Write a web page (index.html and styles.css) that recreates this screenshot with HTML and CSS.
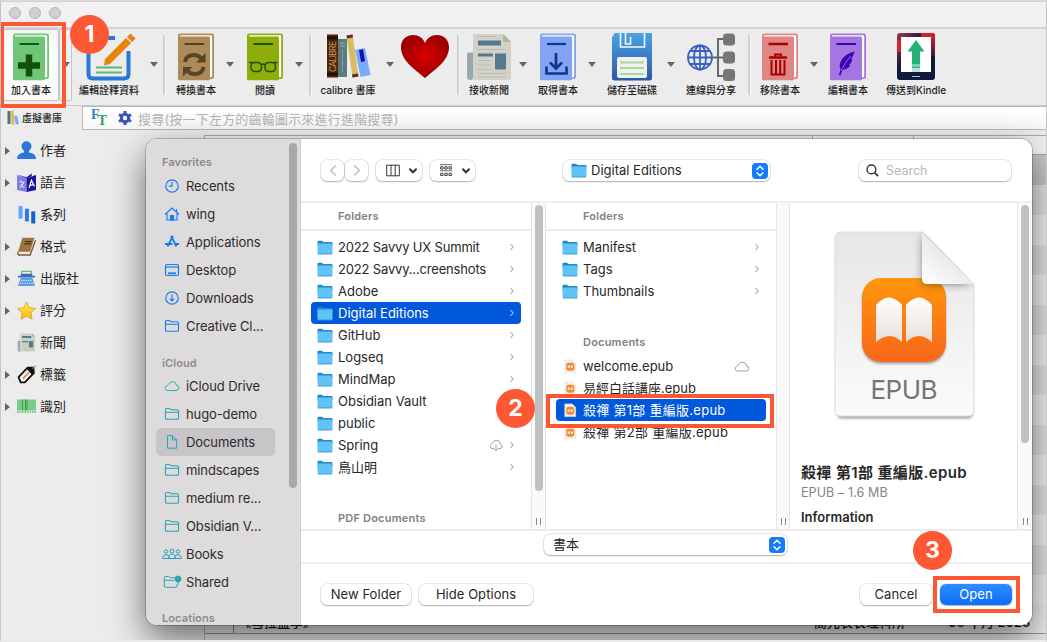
FILE: index.html
```html
<!DOCTYPE html>
<html lang="zh-Hant">
<head>
<meta charset="utf-8">
<title>calibre</title>
<link rel="stylesheet" href="styles.css">
</head>
<body>
<svg class="defs" aria-hidden="true">
  <defs>
    <linearGradient id="fold" x1="0" y1="0" x2="0" y2="1"><stop offset="0" stop-color="#5fc3f7"/><stop offset="1" stop-color="#62c2f6"/></linearGradient>
    <linearGradient id="disk" x1="0" y1="0" x2="0" y2="1"><stop offset="0" stop-color="#4ba3e3"/><stop offset="1" stop-color="#2a57a8"/></linearGradient>
    <radialGradient id="heart"><stop offset="0" stop-color="#dc0000"/><stop offset="1" stop-color="#9c0000"/></radialGradient>
    <linearGradient id="page" x1="0" y1="0" x2="0" y2="1"><stop offset="0" stop-color="#e6e6e6"/><stop offset="1" stop-color="#fbfbfb"/></linearGradient>
    <linearGradient id="orange" x1="0" y1="0" x2="0" y2="1"><stop offset="0" stop-color="#fe960b"/><stop offset="1" stop-color="#f9661a"/></linearGradient>
    <linearGradient id="leaf" x1="0" y1="0" x2="0" y2="1"><stop offset="0" stop-color="#fff"/><stop offset="1" stop-color="#e6dfd9"/></linearGradient>
    <linearGradient id="curl" x1="0" y1="1" x2=".6" y2=".3"><stop offset="0" stop-color="#fff"/><stop offset="1" stop-color="#e4e4e4"/></linearGradient>
    <linearGradient id="kindle" x1="0" y1="0" x2="1" y2="1"><stop offset="0" stop-color="#a8364a"/><stop offset=".4" stop-color="#12193f"/><stop offset="1" stop-color="#12193f"/></linearGradient>
    <linearGradient id="kred" x1="0" y1="0" x2="0" y2="1"><stop offset="0" stop-color="#e0202a"/><stop offset="1" stop-color="#3a1a40"/></linearGradient>
    <linearGradient id="star" x1="0" y1="0" x2="0" y2="1"><stop offset="0" stop-color="#fff04a"/><stop offset="1" stop-color="#fbb416"/></linearGradient>
    <filter id="soft" x="-50%" y="-50%" width="200%" height="200%"><feGaussianBlur stdDeviation="4"/></filter>
    <filter id="soft2" x="-20%" y="-20%" width="140%" height="140%"><feGaussianBlur stdDeviation="1.3"/></filter>
    <clipPath id="sheetclip"><path d="M8 1H89L140 53V179q0 6-6 6H7q-6 0-6-6V7q0-6 7-6z"/></clipPath>
  </defs>
  <symbol id="book" viewBox="0 0 36 48"><rect y=".5" width="36" height="45.5" rx="2.5" fill="currentColor"/><rect x="2" y="2.3" width="32.2" height="42" rx="1" fill="#fff"/><rect y="3.6" width="32" height="43.7" rx="1.5" fill="currentColor"/></symbol>
  <symbol id="folder" viewBox="0 0 16 15"><path d="M.5 1.7q0-1 1-1H5l1.3 1.2h8.2q1 0 1 1V6H.5z" fill="#1f89c5"/><rect x=".5" y="3.6" width="15" height="10.4" rx=".8" fill="url(#fold)"/><path d="M.8 14h14.4" stroke="#3797cd" stroke-width=".9"/></symbol>
  <symbol id="ofolder" viewBox="0 0 16 14"><path d="M1.5 11V2.6q0-1.1 1.1-1.1h3l1.3 1.3h6.5q1.100 0 1.100 1.100V11q0 1.300-1.300 1.300H2.800Q1.500 12.300 1.500 11zM1.500 5.300h13" fill="none" stroke="currentColor" stroke-width="1.100"/></symbol>
  <symbol id="cloud" viewBox="0 0 17 13"><path d="M4.200 11.300h8.600a2.700 2.700 0 0 0 .5-5.400A4.300 4.300 0 0 0 5 4.600 2.400 2.400 0 0 0 3.200 6.400a2.500 2.500 0 0 0 1 4.900z" fill="none" stroke="currentColor" stroke-width="1"/></symbol>
  <symbol id="chev" viewBox="0 0 6 8"><path d="M1.500 1l2.600 3-2.600 3" fill="none" stroke="currentColor" stroke-width="1.100"/></symbol>
  <symbol id="epub" viewBox="0 0 14 16"><path d="M1.500 1h7.800L13 4.600V14.500H1.500z" fill="#f3f3f3" stroke="#dedede" stroke-width=".7"/><rect x="3" y="4" width="8.600" height="8.600" rx="2.200" fill="#f58a32"/><path d="M4.500 6.800h2.300v2.600H4.500zM7.700 6.800H10v2.600H7.700z" fill="#fff0df"/></symbol>
  <symbol id="updown" viewBox="0 0 16 16"><rect width="16" height="16" rx="4" fill="#147bfb"/><path d="M5 6.300l3-3 3 3M5 9.700l3 3 3-3" fill="none" stroke="#fff" stroke-width="1.500" stroke-linecap="round" stroke-linejoin="round"/></symbol>
  <symbol id="news" viewBox="0 0 44 48"><path d="M0 21q0-1.500 2-1.500h5V47H3q-3 0-3-3z" fill="#98a8b0"/><path d="M6 1h31l7 7v36q0 3-3 3H4q2-1 2-3z" fill="#d2d2c8"/><path d="M36 1l8 8h-8z" fill="#b3b3a6"/><path d="M11 7.500h23v5H11zM11 20.500h15v3H11zM28 20.500h11v16H28z" fill="#55798f"/><path d="M11 3.500h18M11 16.500h28M11 27.500h14M11 32h14M11 36.500h14M11 40.500h28M11 44h28" stroke="#bcbcb1"/></symbol>
</svg>

<div class="window">
  <div class="titlebar"><i></i><i></i><i></i></div>

  <div class="toolbar">
    <div class="tool w56 hot"><svg class="bk" viewBox="0 0 36 48" color="#6fc775"><use href="#book"/><path d="M6.500 11H26" stroke="#14541a" stroke-width="2"/><path d="M16 21.500v22M5 32.500h22" stroke="#14500f" stroke-width="6.500"/></svg><span>加入書本</span></div>
    <div class="arrow w13 hot"></div>
    <div class="tool w74"><svg class="sq" viewBox="0 0 48 48"><path d="M30 5H7q-3.500 0-3.500 3.500V41q0 4.500 4.500 4.500h31q4.500 0 4.500-4.500V18" fill="none" stroke="#2878d8" stroke-width="4"/><path d="M11 34.500h26M11 39.500h26" stroke="#5bb96c" stroke-width="2"/><path d="M20 26L41 5l5 5-21 21-6 1.500z" fill="#e8830c"/><path d="M42 4l3.500-3.500 5 5L47 9z" fill="#e8830c"/></svg><span>編輯詮釋資料</span></div>
    <div class="arrow w16"></div>
    <div class="sep w5"></div>
    <div class="tool w58"><svg class="bk" viewBox="0 0 36 48" color="#ac8a59"><use href="#book"/><path d="M6.500 11H26" stroke="#523f1e" stroke-width="2"/><g fill="none" stroke="#584524" stroke-width="4"><path d="M7 29q1-7 9-7 5 0 7.500 4"/><path d="M25.500 34q-1 7-9 7-5 0-7.500-4"/></g><path d="M27.500 20v9.500H18zM5 43.500V34h9.500z" fill="#584524"/></svg><span>轉換書本</span></div>
    <div class="arrow w10"></div>
    <div class="tool w60"><svg class="bk" viewBox="0 0 36 48" color="#8ead08"><use href="#book"/><path d="M6.500 11H26" stroke="#1d5200" stroke-width="2"/><g fill="none" stroke="#1d5200" stroke-width="1.500"><rect x="4" y="29.500" width="10.500" height="9" rx="3.800"/><rect x="18" y="29.500" width="10.500" height="9" rx="3.800"/><path d="M2 29.500h4M26.500 29.500h4M14 32q2.200-2 4.500 0"/></g></svg><span>閱讀</span></div>
    <div class="arrow w8"></div>
    <div class="sep w14"></div>
    <div class="tool w62"><svg class="sq" viewBox="0 0 48 48"><rect x="3" y="1.500" width="11" height="43" fill="#4e2311"/><path d="M3 5h11M3 41h11" stroke="#23100a" stroke-width="3"/><text transform="translate(11.500 39) rotate(-90)" font-size="8.500" textLength="31" fill="#c99a4a">CALIBRE</text><rect x="14" y="6" width="9" height="38" fill="#5b7d7e"/><path d="M16 10h5M16 13h5" stroke="#9eb4b2"/><path d="M18.500 39V17" stroke="#9eb4b2" stroke-dasharray="1.500 1"/><path d="M22.500 2.500l6-1 6 42-6 1z" fill="#d9bb62"/><path d="M22.500 2.500l6-1 .5 3-6 1zM28 41.500l6-1 .5 3-6 1z" fill="#6e2430"/><path d="M31 17l10-2 5.500 27-10 2z" fill="#76abff"/><path d="M35 17l4-.8 2 12-4 .8z" fill="#1411a0"/></svg><span>calibre 書庫</span></div>
    <div class="arrow w22"></div>
    <div class="tool w48"><svg class="sq" viewBox="0 0 48 48"><path d="M24 45C12 35 0 27 0 14 0 6 6 2 12 2c6 0 10 3 12 8C26 5 30 2 36 2c6 0 12 4 12 12 0 13-12 21-24 31z" fill="url(#heart)"/></svg></div>
    <div class="sep w18"></div>
    <div class="tool w44"><svg class="nw"><use href="#news"/></svg><span>接收新聞</span></div>
    <div class="arrow w24"></div>
    <div class="tool w46"><svg class="bk" viewBox="0 0 36 48" color="#84a3f3"><use href="#book"/><path d="M7 11H26" stroke="#0b3a8c" stroke-width="2.200"/><path d="M16 20v14M10 29.500l6 6 6-6M6.500 33.500v7h20v-7" fill="none" stroke="#0b3a8c" stroke-width="2.700"/></svg><span>取得書本</span></div>
    <div class="arrow w22"></div>
    <div class="tool w58"><svg class="dk" viewBox="0 0 40 48"><path d="M3 0h37v45q0 2.500-2.500 2.500h-35Q0 47.500 0 45V4z" fill="url(#disk)"/><path d="M8.500 0v14h24V0M13.500 0v11h5V4" fill="none" stroke="#f4f8fc" stroke-width="1.600"/><rect x="5" y="24" width="30" height="21" rx="2" fill="#f0f1ec"/><path d="M8 29.500h24M8 35h24M8 41h24" stroke="#a4d8a9" stroke-width="2"/></svg><span>儲存至磁碟</span></div>
    <div class="arrow w20"></div>
    <div class="tool w60"><svg class="sq" viewBox="0 0 48 48"><g fill="none" stroke="#3b60c2" stroke-width="1.800"><circle cx="13" cy="24.500" r="12"/><ellipse cx="13" cy="24.500" rx="6" ry="12"/><path d="M13 12.500v24M1 24.500h24M3 18h20M3 31h20"/></g><path d="M25 24.500h14M39 6h-8v37h8" fill="none" stroke="#626c6c" stroke-width="2"/><rect x="36" y=".5" width="12" height="12" rx="3.500" fill="#737777"/><rect x="36" y="18.500" width="12" height="12" rx="3.500" fill="#737777"/><rect x="36" y="36" width="12" height="12" rx="3.500" fill="#737777"/></svg><span>連線與分享</span></div>
    <div class="sep w16"></div>
    <div class="tool w46"><svg class="bk" viewBox="0 0 36 48" color="#df8685"><use href="#book"/><path d="M6.500 11H26M7 24.500h18" stroke="#a90000" stroke-width="2.500"/><path d="M13 23.500v-2h6v2M9.500 27v14.500h13V27M14 27v14M18.200 27v14" fill="none" stroke="#a90000" stroke-width="2"/></svg><span>移除書本</span></div>
    <div class="arrow w22"></div>
    <div class="tool w46"><svg class="bk" viewBox="0 0 36 48" color="#a376e2"><use href="#book"/><path d="M6.500 11H26" stroke="#4200b3" stroke-width="2"/><path d="M24.500 18.500Q11 22 9.500 33l1 3-1.500 6 1.500.5 2-5.500q6-1 8-5l-2 .3q3.500-2.500 4-6l-1.500.3q2-3 3.500-8.100z" fill="#4200b3"/><path d="M11 38q4-9 10-15" fill="none" stroke="#a376e2" stroke-width=".9"/></svg><span>編輯書本</span></div>
    <div class="tool w90"><svg class="kd" viewBox="0 0 38 48"><rect width="38" height="47" rx="3" fill="url(#kindle)"/><path d="M24 0h11q3 0 3 3v20h-4V4H24z" fill="url(#kred)"/><path d="M0 7h4v12H0z" fill="#d8222c"/><rect x="4" y="4" width="30" height="35" fill="#fff"/><path d="M19 7l8.500 11.500H23V39h-8V18.500h-4.500z" fill="#27b07a"/><path d="M15 31h8v3h-8z" fill="#7dd0b0"/><path d="M15 35h8v4h-8z" fill="#b9e4d5"/><path d="M15 43.500h8" stroke="#b7bccf"/></svg><span>傳送到Kindle</span></div>
  </div>

  <div class="searchrow">
    <div class="vlib"><svg viewBox="0 0 12 16"><path d="M.5 1h3v13h-3z" fill="#54727a"/><path d="M3.500 1l3-.5 1.200 14-3 .3z" fill="#d9bb62"/><path d="M7 6l3-.6 2 8.600-3 .6z" fill="#76abff"/></svg>虛擬書庫</div>
    <div class="searchbox">
      <span class="ft"><b>F</b><b>T</b></span>
      <svg class="gear" viewBox="0 0 14 14"><circle cx="7" cy="7" r="3.700" fill="none" stroke="#3a52bd" stroke-width="3"/><path d="M7 0v2.500M7 11.500V14M1 3.500l2 1.200M11 9.300l2 1.200M1 10.500l2-1.200M11 4.700l2-1.200" stroke="#3a52bd" stroke-width="3"/></svg>
      <span class="ph">搜尋(按一下左方的齒輪圖示來進行進階搜尋)</span>
    </div>
  </div>

  <div class="main">
    <ul class="tags">
      <li><svg viewBox="0 0 18 18"><circle cx="9" cy="5" r="4.700" fill="#2b78da"/><path d="M0 17q0-5 6.500-6V8.500h5V11q6.500 1 6.500 6z" fill="#2b78da"/></svg>作者</li>
      <li><svg viewBox="0 0 18 18"><path d="M0 2l9 3v13l-9-2z" fill="#827fe2"/><path d="M9 5l9-3v14l-9 2z" fill="#1613a0"/><path d="M0 1.500L9 4l5-3.500V3L9 5z" fill="#1a1692"/><path d="M2.500 8l4 1-3.500 5M3.500 10.500l3 3.500" stroke="#fff" fill="none" stroke-width=".9"/><path d="M11.500 14l2.200-7 2.800 5.500M12 11.700l4-.6" stroke="#fff" fill="none" stroke-width="1.200"/></svg>語言</li>
      <li class="leafrow"><svg viewBox="0 0 18 18"><path d="M1.500 1h3.800v12H1.500z" fill="#62a4fa"/><path d="M7.500 3.500h3.800v12H7.500z" fill="#2b7de5"/><path d="M13.500 6h3.800v11.500h-3.800z" fill="#1761ca"/></svg>系列</li>
      <li><svg viewBox="0 0 18 18"><path d="M5 .8h11.500L12.500 14H1z" fill="#9b7443"/><path d="M1 14q-1 3 1.500 3h10l5-14" fill="none" stroke="#80592d" stroke-width="1.300"/><path d="M7.500 4.300H14M6.800 6.500h6.500" stroke="#4d3515" stroke-width="1.200"/></svg>格式</li>
      <li><svg viewBox="0 0 20 18"><path d="M5 4V1.500h10V4" fill="none" stroke="#62ba72" stroke-width="1.300"/><path d="M4 4h12v2h3v2H1V6h3z" fill="#3671b5"/><path d="M4 8h12l3 9H1z" fill="#5c9de7"/><path d="M4 11h12M3 14h14" stroke="#e7f0fb" stroke-dasharray="1.500 1"/></svg>出版社</li>
      <li><svg viewBox="0 0 18 18"><path d="M9 .8l2.600 5.500 6 .8-4.400 4.200 1.100 6L9 14.400l-5.300 2.900 1.100-6L.4 7.100l6-.8z" fill="url(#star)" stroke="#e3a12f" stroke-width=".8"/></svg>評分</li>
      <li class="leafrow"><svg><use href="#news"/></svg>新聞</li>
      <li><svg viewBox="0 0 18 18"><path d="M1.500 11.500L10 2.500l5.500 0 .5 5-8.500 9H3.500z" fill="#f7f3ee" stroke="#111" stroke-width="1.700"/><path d="M9 3.500L11 2h4.500l.5 5-2 2z" fill="#111"/><path d="M5.500 13l6-6" stroke="#e08a46" stroke-width="1.700"/><path d="M14.500 3.500L18 .5" stroke="#888"/></svg>標籤</li>
      <li><svg viewBox="0 0 19 14"><path d="M0 0h19v11H0z" fill="#79cc87"/><path d="M5.500 0v11M8.500 0v11M10 0v11" stroke="#329b44" stroke-width=".9"/><path d="M0 12.500h19" stroke="#79cc87" stroke-width="2" stroke-dasharray="1.500 1"/></svg>識別</li>
    </ul>
    <div class="books">
      <div class="cols"><i></i><i></i></div>
      <div class="hdr"></div>
      <div class="rows"></div>
      <div class="lastrow"><i></i><span class="title">《雪拉盤季》</span><span class="author">簡元表表理科所</span><span class="date">06 十月 2023</span></div>
    </div>
  </div>

  <section class="dialog">
    <nav class="side">
      <h4>Favorites</h4>
      <a><svg viewBox="0 0 16 16"><circle cx="8" cy="8" r="6.200"/><path d="M8 4v4.200H4.800"/></svg>Recents</a>
      <a><svg viewBox="0 0 16 16"><path d="M1 8.500L8 2l7 6.500M3 7.500V14h10V7.500M12.500 3v3"/><path d="M6.500 9.500h3V14h-3z" fill="currentColor"/></svg>wing</a>
      <a><svg viewBox="0 0 16 16"><path d="M7 2l5.500 10.500M9 2L3.500 12.500M1 10h7.500M12 10h3" stroke-width="1.800"/></svg>Applications</a>
      <a><svg viewBox="0 0 16 16"><rect x="1.500" y="2.500" width="13" height="11" rx="1.500"/><path d="M1.500 5h13"/><path d="M4 11.300h8" stroke-width="1.800"/></svg>Desktop</a>
      <a><svg viewBox="0 0 16 16"><circle cx="8" cy="8" r="6.200"/><path d="M8 4.500v6.500M5.700 8.700L8 11l2.300-2.300"/></svg>Downloads</a>
      <a><svg><use href="#ofolder"/></svg>Creative Cl...</a>
      <h4 class="second">iCloud</h4>
      <a class="t"><svg><use href="#cloud"/></svg>iCloud Drive</a>
      <a class="t"><svg><use href="#ofolder"/></svg>hugo-demo</a>
      <a class="t on"><svg viewBox="0 0 16 16"><path d="M3.500 1.700h5l4.200 4.200v8.300H3.500zM8.500 1.700v4.200h4.200"/></svg>Documents</a>
      <a class="t"><svg><use href="#ofolder"/></svg>mindscapes</a>
      <a class="t"><svg><use href="#ofolder"/></svg>medium re...</a>
      <a class="t"><svg><use href="#ofolder"/></svg>Obsidian V...</a>
      <a class="t"><svg class="wide" viewBox="0 0 20 12"><circle cx="4" cy="3.500" r="1.700"/><circle cx="10" cy="3" r="2"/><circle cx="16" cy="3.500" r="1.700"/><path d="M.7 10.500q0-4 3.300-4t3.300 4zM6.700 10.500q0-4.500 3.300-4.500t3.300 4.500zM12.700 10.500q0-4 3.300-4t3.300 4z"/></svg>Books</a>
      <a class="t"><svg class="wide" viewBox="0 0 20 14"><path d="M13 2.800H8L6.700 1.500H3.500q-1.200 0-1.200 1.200V11q0 1.300 1.300 1.300h10.200q1.300 0 1.300-1.300V9M2.300 5.300H12"/><circle cx="16" cy="4" r="3" fill="currentColor"/><path d="M16 2.500v7"/></svg>Shared</a>
      <h4 class="third">Locations</h4>
      <div class="thumb"></div>
    </nav>

    <div class="pane">
      <header class="head">
        <div class="ctl nav back"><svg viewBox="0 0 10 14"><path d="M8 1.500L2.500 7 8 12.500"/></svg></div>
        <div class="ctl nav"><svg viewBox="0 0 10 14"><path d="M2 1.500L7.500 7 2 12.500"/></svg></div>
        <div class="ctl view"><svg class="vi" viewBox="0 0 14 12"><path d="M.7.700h12.600v10.600H.7zM5 .7v10.600M9.200.7v10.600" /></svg><svg class="dn" viewBox="0 0 8 6"><path d="M1 1.300l3 3 3-3"/></svg></div>
        <div class="ctl group"><svg class="vi" viewBox="0 0 14 14"><path d="M.5.700h13M.5 7.300h13" stroke-width=".8"/><path d="M1.200 3h2.600v2.400H1.200zM5.700 3h2.600v2.400H5.700zM10.200 3h2.600v2.400h-2.600zM1.200 10h2.600v2.400H1.200zM5.700 10h2.600v2.400H5.700zM10.200 10h2.600v2.400h-2.600z"/></svg><svg class="dn" viewBox="0 0 8 6"><path d="M1 1.300l3 3 3-3"/></svg></div>
        <div class="ctl where"><svg class="fi"><use href="#folder"/></svg><span>Digital Editions</span><svg class="ud"><use href="#updown"/></svg></div>
        <div class="ctl find"><svg viewBox="0 0 14 14"><circle cx="5.800" cy="5.800" r="4.700"/><path d="M9.300 9.300L13 13" stroke-width="2"/></svg><span>Search</span></div>
      </header>

      <div class="browser">
        <div class="col">
          <h5>Folders</h5>
          <ul>
            <li class="tight"><svg class="fi"><use href="#folder"/></svg><span>2022 Savvy UX Summit</span><svg class="cv"><use href="#chev"/></svg></li>
            <li class="tight"><svg class="fi"><use href="#folder"/></svg><span>2022 Savvy...creenshots</span><svg class="cv"><use href="#chev"/></svg></li>
            <li><svg class="fi"><use href="#folder"/></svg><span>Adobe</span><svg class="cv"><use href="#chev"/></svg></li>
            <li class="sel"><svg class="fi"><use href="#folder"/></svg><span>Digital Editions</span><svg class="cv"><use href="#chev"/></svg></li>
            <li><svg class="fi"><use href="#folder"/></svg><span>GitHub</span><svg class="cv"><use href="#chev"/></svg></li>
            <li><svg class="fi"><use href="#folder"/></svg><span>Logseq</span><svg class="cv"><use href="#chev"/></svg></li>
            <li><svg class="fi"><use href="#folder"/></svg><span>MindMap</span><svg class="cv"><use href="#chev"/></svg></li>
            <li><svg class="fi"><use href="#folder"/></svg><span>Obsidian Vault</span></li>
            <li><svg class="fi"><use href="#folder"/></svg><span>public</span></li>
            <li><svg class="fi"><use href="#folder"/></svg><span>Spring</span><svg class="cl" viewBox="0 0 17 14"><path d="M6.500 10.300H4.200a2.500 2.500 0 0 1-1-4.500A2.400 2.400 0 0 1 5 4.100a4.300 4.300 0 0 1 8.300 1.300 2.500 2.500 0 0 1-.5 4.900h-2.300M8.500 6v6.500M6.500 10.700l2 2 2-2" fill="none" stroke="currentColor"/></svg><svg class="cv"><use href="#chev"/></svg></li>
            <li class="cjk"><svg class="fi"><use href="#folder"/></svg><span>鳥山明</span><svg class="cv"><use href="#chev"/></svg></li>
          </ul>
          <h6 class="pdf">PDF Documents</h6>
        </div>
        <div class="gutter"><div class="bar"></div><b></b></div>
        <div class="col">
          <h5>Folders</h5>
          <ul>
            <li><svg class="fi"><use href="#folder"/></svg><span>Manifest</span><svg class="cv"><use href="#chev"/></svg></li>
            <li><svg class="fi"><use href="#folder"/></svg><span>Tags</span><svg class="cv"><use href="#chev"/></svg></li>
            <li><svg class="fi"><use href="#folder"/></svg><span>Thumbnails</span><svg class="cv"><use href="#chev"/></svg></li>
          </ul>
          <h6 class="dochead">Documents</h6>
          <ul class="docs">
            <li><svg class="fi"><use href="#epub"/></svg><span>welcome.epub</span><svg class="cl far"><use href="#cloud"/></svg></li>
            <li class="cjk"><svg class="fi"><use href="#epub"/></svg><span>易經白話講座.epub</span></li>
            <li class="sel cjk loose"><svg class="fi"><use href="#epub"/></svg><span>殺禪 第1部 重編版.epub</span></li>
            <li class="cjk loose"><svg class="fi"><use href="#epub"/></svg><span>殺禪 第2部 重編版.epub</span></li>
          </ul>
        </div>
        <div class="gutter mid"><b></b></div>
        <div class="preview">
          <svg class="sheet" viewBox="0 0 141 190">
            <path d="M3 12V182q0 6 6 6h124q6 0 6-6V60z" fill="#8a8a8a" opacity=".65" filter="url(#soft2)"/>
            <path d="M8 1H89L140 53V179q0 6-6 6H7q-6 0-6-6V7q0-6 7-6z" fill="url(#page)" stroke="#dadada"/>
            <rect x="28" y="49" width="84" height="84" rx="19" fill="#777" opacity=".6" filter="url(#soft2)"/>
            <rect x="28" y="47" width="84" height="84" rx="19" fill="url(#orange)"/>
            <path d="M42 74q13-15 26 0V111q-12-12-26 0zM72 74q13-15 26 0V111q-13-12-26 0z" fill="url(#leaf)"/>
            <g clip-path="url(#sheetclip)"><path d="M89 4V53h48z" fill="#222" opacity=".6" filter="url(#soft)"/></g>
            <path d="M88 1V48q0 5 5 5h47z" fill="url(#curl)"/>
            <text x="70" y="168" text-anchor="middle" textLength="67" font-size="26" fill="#747474">EPUB</text>
          </svg>
          <strong>殺禪 第1部 重編版.epub</strong>
          <small>EPUB – 1.6 MB</small>
          <em>Information</em>
        </div>
        <div class="gutter last"><div class="bar short"></div><b></b></div>
      </div>

      <div class="typerow"><div class="ctl type"><span>書本</span><svg class="ud"><use href="#updown"/></svg></div></div>
      <footer class="foot">
        <div class="ctl btn newf">New Folder</div>
        <div class="ctl btn hide">Hide Options</div>
        <div class="ctl btn cancel">Cancel</div>
        <div class="ctl btn open">Open</div>
      </footer>
    </div>
  </section>

  <div class="frame f1"></div><div class="frame f2"></div><div class="frame f3"></div>
  <div class="num n1">1</div><div class="num n2">2</div><div class="num n3">3</div>
</div>
</body>
</html>
```
FILE: styles.css
```css
* { box-sizing: border-box; margin: 0; padding: 0; }
body { width: 1047px; height: 642px; overflow: hidden; font-family: Inter, "Noto Sans CJK TC", sans-serif; color: #272727; font-size: 13px; }
ul { list-style: none; }
svg { display: block; flex: none; overflow: visible; }
.defs { position: absolute; width: 0; height: 0; }
.window { position: relative; width: 1047px; height: 642px; overflow: hidden; background: #ececec; border: 1px solid #c6c5c6; border-bottom: 2px solid #eaeaea; border-top-color: #dcdadc; display: flex; flex-direction: column; }
.titlebar { height: 28px; flex: none; background: #f3f0f3; border-top: 1px solid #d2d0d2; border-bottom: 2px solid #d5d4d5; display: flex; gap: 8px; padding: 5px 0 0 8px; }
.titlebar i { width: 12px; height: 12px; border-radius: 50%; background: #d2d0d2; border: 1px solid #b5b3b5; }

.toolbar { height: 77px; flex: none; display: flex; padding-left: 2px; border-bottom: 1px solid #c8c8c8; }
.tool { height: 72px; padding-top: 4px; display: flex; flex-direction: column; align-items: center; }
.tool span { font-size: 10px; line-height: 14px; margin-top: 2px; white-space: nowrap; font-weight: 500; color: #1c1c1c; }
.tool .bk { width: 36px; height: 48px; }
.tool .sq { width: 48px; height: 48px; }
.tool .nw { width: 44px; height: 48px; }
.tool .dk { width: 40px; height: 48px; }
.tool .kd { width: 38px; height: 48px; }
.tool.hot { background: linear-gradient(#f4f4f4, #fff 40%, #fbfbfb); border: 1px solid #c5c5c5; border-radius: 2px; padding-top: 3px; }
.arrow { height: 72px; display: flex; justify-content: center; padding-top: 33px; }
.arrow::after { content: ""; border: 4px solid transparent; border-top: 5px solid #666; width: 0; height: 0; border-bottom: 0; }
.arrow.hot { border: 1px solid #c5c5c5; border-radius: 2px; background: #f1f1f1; padding-top: 32px; }
.sep { height: 60px; margin-top: 6px; display: flex; justify-content: center; }
.sep::after { content: ""; width: 2px; background: #d0d0d0; border-right: 1px solid #f8f8f8; }
.w5 { width: 5px; } .w8 { width: 8px; } .w10 { width: 10px; } .w13 { width: 13px; } .w14 { width: 14px; } .w16 { width: 16px; } .w18 { width: 18px; }
.w20 { width: 20px; } .w22 { width: 22px; } .w24 { width: 24px; } .w44 { width: 44px; } .w46 { width: 46px; } .w48 { width: 48px; }
.w56 { width: 56px; } .w58 { width: 58px; } .w60 { width: 60px; } .w62 { width: 62px; } .w74 { width: 74px; } .w90 { width: 90px; }

.searchrow { height: 25px; flex: none; display: flex; }
.vlib { width: 81px; display: flex; align-items: center; gap: 3px; padding-left: 6px; font-size: 10px; font-weight: 500; padding-bottom: 2px; }
.vlib svg { width: 12px; height: 16px; }
.searchbox { flex: 1; height: 24px; background: linear-gradient(#fff, #f7f7f7); border: 1px solid #b9b9b9; border-right: 0; display: flex; align-items: center; }
.ft { display: flex; margin-left: 8px; font: bold 14px/14px "Liberation Serif", serif; color: #2f83cf; width: 18px; }
.ft b + b { color: #2ea35a; padding-top: 5px; margin-left: -2px; }
.ft b:first-child { margin-top: -1px; }
.gear { width: 14px; height: 14px; margin-left: 9px; }
.ph { margin-left: 6px; color: #b4b4b4; letter-spacing: .2px; white-space: nowrap; }

.main { flex: 1; display: flex; min-height: 0; }
.tags { width: 203px; flex: none; padding-top: 4px; }
.tags li { height: 32px; display: flex; align-items: center; gap: 3px; padding: 0 0 3px 4px; color: #1e1e1e; }
.tags li::before { content: ""; border: 4px solid transparent; border-left: 5px solid #666; border-right: 0; margin: 3px 4px 0 0; }
.tags .leafrow::before { visibility: hidden; }
.tags svg { width: 19px; height: 19px; margin: 2px 1px 0 0; }
.books { flex: 1; display: flex; flex-direction: column; border-left: 1px solid #b5b5b5; margin-top: 4px; border-top: 1px solid #aaa; min-width: 0; }
.cols { height: 19px; display: flex; justify-content: flex-end; gap: 100px; padding-right: 132px; background: linear-gradient(#ececec, #fafafa); border-bottom: 1px solid #a8a8a8; flex: none; }
.cols i { width: 1px; height: 6px; background: #aaa; }
.hdr { height: 30px; flex: none; background: #c9c9c9; }
.rows { height: 420px; flex: none; background: repeating-linear-gradient(#e3e7e5 0 30px, #f5f5f5 30px 60px); }
.lastrow { height: 29px; flex: none; background: #eef0ef; border-bottom: 1px solid #999; display: flex; font-size: 13px; line-height: 34px; font-weight: 500; white-space: nowrap; overflow: hidden; }
.lastrow i { width: 29px; border-right: 1px solid #888; }
.lastrow span { color: #111; }
.title { width: 577px; padding-left: 4px; }
.author { width: 137px; padding-left: 3px; }

.dialog { position: absolute; left: 145px; top: 138px; width: 886px; height: 486px; display: flex; border-radius: 11px; overflow: visible; background: #fff; box-shadow: 0 0 0 1px rgba(0,0,0,.2), 0 14px 36px rgba(0,0,0,.56); }
.side { width: 155px; flex: none; background: #dedbdd; border-radius: 11px 0 0 11px; border-right: 1px solid #d0cdcf; padding: 14px 25px 0 10px; position: relative; overflow: hidden; }
.side h4 { font-size: 11px; line-height: 19px; height: 19px; font-weight: 600; color: #8d8a8c; padding-left: 6px; letter-spacing: .1px; }
.side .second { margin-top: 14px; height: 18px; }
.side .third { margin-top: 13px; }
.side a { height: 28px; display: flex; align-items: center; gap: 6px; padding-left: 8px; border-radius: 5px; white-space: nowrap; font-size: 13px; color: #2d2b2c; letter-spacing: -.1px; }
.side a svg { width: 16px; height: 16px; color: #167cf3; fill: none; stroke: #167cf3; stroke-width: 1.2; }
.side a.t svg { color: #2aa3b9; stroke: #2aa3b9; stroke-width: 1; }
.side a svg.wide { width: 20px; margin: 0 -2px; }
.side .on { background: #c8c5c9; }
.thumb { position: absolute; left: 143px; top: 4px; width: 8px; height: 345px; border-radius: 4px; background: #a8a8a8; }

.pane { flex: 1; min-width: 0; display: flex; flex-direction: column; border-radius: 0 11px 11px 0; overflow: hidden; }
.head { height: 64px; flex: none; display: flex; align-items: flex-start; padding: 21px 0 0 20px; border-bottom: 2px solid #efefef; }
.ctl { height: 21px; border-radius: 6px; background: #fff; box-shadow: 0 0 0 .5px rgba(0,0,0,.16), 0 1px 1.500px rgba(0,0,0,.25); display: flex; align-items: center; flex: none; }
.ctl svg { fill: none; stroke: #333; }
.ctl span { margin-top: -2px; }
.nav { width: 23px; justify-content: center; margin-right: 8px; }
.nav.back { margin-right: 1px; }
.nav svg { width: 10px; height: 13px; stroke: #bdbdbd; stroke-width: 1.500; }
.view { width: 46px; padding-left: 10px; gap: 9px; margin-right: 8px; }
.group { width: 45px; padding-left: 9px; gap: 9px; margin-right: 88px; }
.vi { width: 14px; height: 13px; }
.dn { width: 8px; height: 6px; stroke-width: 2; stroke-linecap: round; }
.where { width: 207px; padding: 0 2px 0 8px; gap: 4px; margin-right: 89px; }
.where span { flex: 1; }
.ctl .ud, .ctl .fi { stroke: none; }
.ud { width: 16px; height: 16px; }
.find { width: 152px; padding-left: 7px; gap: 7px; color: #b8b8b8; }
.find svg { width: 13px; height: 13px; stroke-width: 1.500; }
.find span { font-size: 12.500px; margin-top: 0; }
.fi { width: 16px; height: 15px; }

.browser { height: 328px; flex: none; display: flex; border-bottom: 2px solid #ececec; }
.col { width: 230px; flex: none; overflow: hidden; display: flex; flex-direction: column; }
.col h5, .col h6 { font-size: 11px; font-weight: 600; color: #828282; letter-spacing: .2px; line-height: 27px; }
.col h5 { height: 28px; border-bottom: 2px solid #ececec; padding-left: 37px; flex: none; }
.col h6 { padding-left: 37px; }
.col ul { padding: 5px 10px 0; }
.col li { height: 22px; display: flex; align-items: center; gap: 5px; padding: 0 6px; border-radius: 4px; white-space: nowrap; }
.col li span { flex: 1; }
.col .tight span { letter-spacing: -.17px; }
.col .loose span { letter-spacing: .27px; }
.col .cjk span { margin-top: -2px; }
.col .sel { background: #0258da; color: #fff; }
.cv { width: 6px; height: 8px; color: #aaa; }
.sel .cv { color: #a9c8f5; }
.cl { width: 16px; height: 13px; color: #999; }
.far { margin-right: 10px; }
.pdf { margin-top: 27px; }
.col .docs { padding-top: 0; }
.dochead { margin-top: 27px; height: 26px; }
.gutter { width: 15px; flex: none; background: #fafafa; border-left: 1px solid #e4e4e4; border-right: 1px solid #e4e4e4; display: flex; flex-direction: column; align-items: center; padding: 2px 0 4px; }
.gutter.mid { width: 14px; }
.gutter.last { border-right: 0; }
.bar { width: 8px; height: 286px; background: #c1c1c1; border-radius: 4px; }
.bar.short { height: 238px; }
.gutter b { margin-top: auto; width: 5px; height: 7px; border: solid #8a8a8a; border-width: 0 1px; }
.preview { width: 227px; flex: none; padding-left: 11px; }
.sheet { width: 141px; height: 190px; margin: 28px 0 0 33px; }
.preview strong, .preview small, .preview em { display: block; font-style: normal; white-space: nowrap; }
.preview strong { margin-top: 41px; font-size: 15px; line-height: 22px; font-weight: 600; letter-spacing: .37px; }
.preview small { font-size: 12.500px; line-height: 18px; color: #858585; letter-spacing: .1px; }
.preview em { font-size: 13px; line-height: 16px; font-weight: 600; margin-top: 7px; }
.typerow { height: 33px; flex: none; border-bottom: 2px solid #efefef; padding: 3px 0 0 243px; }
.type { width: 243px; padding: 0 2px 0 9px; }
.type span { flex: 1; }
.foot { flex: 1; display: flex; align-items: flex-start; padding: 20px 0 0 20px; }
.btn { justify-content: center; letter-spacing: .05px; padding-bottom: 2px; }
.newf { width: 90px; margin-right: 8px; }
.hide { width: 114px; margin-right: 327px; }
.cancel { width: 72px; margin-right: 8px; }
.open { width: 72px; color: #fff; background: linear-gradient(#2d8cff, #0a6ffa); }

.frame { position: absolute; border: 4px solid #fe5733; }
.f1 { left: -1px; top: 21px; width: 66px; height: 86px; }
.f2 { left: 545px; top: 393px; width: 228px; height: 34px; }
.f3 { left: 932px; top: 575px; width: 87px; height: 37px; }
.num { position: absolute; width: 39px; height: 39px; border-radius: 50%; background: #fe5733; color: #fff; font: 700 23px/39px Inter, sans-serif; text-align: center; }
.n1 { left: 69px; top: 14px; } .n2 { left: 495px; top: 388px; } .n3 { left: 912px; top: 530px; }
```
